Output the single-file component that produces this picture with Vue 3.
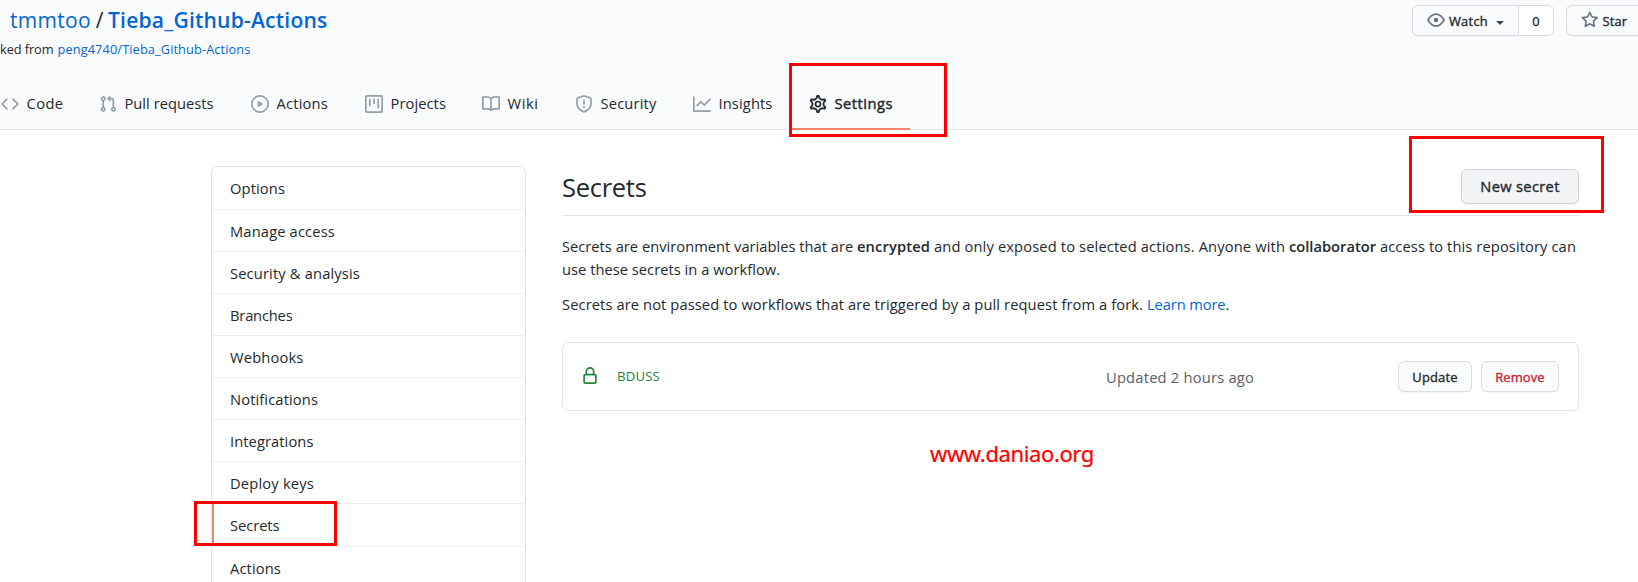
<script setup>
// Adjusts the tracking of a label so that it takes up the given width.
const vFit = {
  mounted(el, { value }) {
    const natural = el.getBoundingClientRect().width
    const count = el.textContent.length
    el.style.letterSpacing = `${((value - natural) / count).toFixed(3)}px`
  }
}

const icons = {
  code: 'M4.72 3.22a.75.75 0 011.06 1.06L2.06 8l3.72 3.72a.75.75 0 11-1.06 1.06L.47 8.53a.75.75 0 010-1.06l4.25-4.25zm6.56 0a.75.75 0 10-1.06 1.06L13.94 8l-3.72 3.72a.75.75 0 101.06 1.06l4.25-4.25a.75.75 0 000-1.06l-4.25-4.25z',
  pull: 'M7.177 3.073L9.573.677A.25.25 0 0110 .854v4.792a.25.25 0 01-.427.177L7.177 3.427a.25.25 0 010-.354zM3.75 2.5a.75.75 0 100 1.5.75.75 0 000-1.5zm-2.25.75a2.25 2.25 0 113 2.122v5.256a2.251 2.251 0 11-1.5 0V5.372A2.25 2.25 0 011.5 3.25zM11 2.5h-1V4h1a1 1 0 011 1v5.628a2.251 2.251 0 101.5 0V5A2.5 2.5 0 0011 2.5zm1 10.25a.75.75 0 111.5 0 .75.75 0 01-1.5 0zM3.75 12a.75.75 0 100 1.5.75.75 0 000-1.5z',
  play: 'M1.5 8a6.5 6.5 0 1113 0 6.5 6.5 0 01-13 0zM8 0a8 8 0 100 16A8 8 0 008 0zM6.379 5.227A.25.25 0 006 5.442v5.117a.25.25 0 00.379.214l4.264-2.559a.25.25 0 000-.428L6.379 5.227z',
  project: 'M1.75 0A1.75 1.75 0 000 1.75v12.5C0 15.216.784 16 1.75 16h12.5A1.75 1.75 0 0016 14.25V1.75A1.75 1.75 0 0014.25 0H1.75zM1.5 1.75a.25.25 0 01.25-.25h12.5a.25.25 0 01.25.25v12.5a.25.25 0 01-.25.25H1.75a.25.25 0 01-.25-.25V1.75zM11.75 3a.75.75 0 00-.75.75v7.5a.75.75 0 001.5 0v-7.5a.75.75 0 00-.75-.75zm-8.25.75a.75.75 0 011.5 0v5.5a.75.75 0 01-1.5 0v-5.5zM8 3a.75.75 0 00-.75.75v3.5a.75.75 0 001.5 0v-3.5A.75.75 0 008 3z',
  book: 'M0 1.75A.75.75 0 01.75 1h4.253c1.227 0 2.317.59 3 1.501A3.744 3.744 0 0111.006 1h4.245a.75.75 0 01.75.75v10.5a.75.75 0 01-.75.75h-4.507a2.25 2.25 0 00-1.591.659l-.622.621a.75.75 0 01-1.06 0l-.622-.621A2.25 2.25 0 005.258 13H.75a.75.75 0 01-.75-.75V1.75zm8.755 3a2.25 2.25 0 012.25-2.25H14.5v9h-3.757c-.71 0-1.4.201-1.992.572l.004-7.322zm-1.504 7.324l.004-5.073-.002-2.253A2.25 2.25 0 005.003 2.5H1.5v9h3.757a3.75 3.75 0 011.994.574z',
  shield: 'M7.467.133a1.75 1.75 0 011.066 0l5.25 1.68A1.75 1.75 0 0115 3.48V7c0 1.566-.32 3.182-1.303 4.682-.983 1.498-2.585 2.813-5.032 3.855a1.7 1.7 0 01-1.33 0c-2.447-1.042-4.049-2.357-5.032-3.855C1.32 10.182 1 8.566 1 7V3.48a1.75 1.75 0 011.217-1.667l5.25-1.68zm.61 1.429a.25.25 0 00-.153 0l-5.25 1.68a.25.25 0 00-.174.238V7c0 1.358.275 2.666 1.057 3.86.784 1.194 2.121 2.34 4.366 3.297a.2.2 0 00.154 0c2.245-.956 3.582-2.104 4.366-3.298C13.225 9.666 13.5 8.36 13.5 7V3.48a.25.25 0 00-.174-.237l-5.25-1.68zM9 10.5a1 1 0 11-2 0 1 1 0 012 0zm-.25-5.75a.75.75 0 10-1.5 0v3a.75.75 0 001.5 0v-3z',
  graph: 'M1.5 1.75a.75.75 0 00-1.5 0v12.5c0 .414.336.75.75.75h14.5a.75.75 0 000-1.5H1.5V1.75zm14.28 2.53a.75.75 0 00-1.06-1.06L10 7.94 7.53 5.47a.75.75 0 00-1.06 0L3.22 8.72a.75.75 0 001.06 1.06L7 7.06l2.47 2.47a.75.75 0 001.06 0l5.25-5.25z',
  eye: 'M1.679 7.932c.412-.621 1.242-1.75 2.366-2.717C5.175 4.242 6.527 3.5 8 3.5c1.473 0 2.824.742 3.955 1.715 1.124.967 1.954 2.096 2.366 2.717a.119.119 0 010 .136c-.412.621-1.242 1.75-2.366 2.717C10.825 11.758 9.473 12.5 8 12.5c-1.473 0-2.824-.742-3.955-1.715C2.92 9.818 2.09 8.69 1.679 8.068a.119.119 0 010-.136zM8 2c-1.981 0-3.67.992-4.933 2.078C1.797 5.169.88 6.423.43 7.1a1.619 1.619 0 000 1.798c.45.678 1.367 1.932 2.637 3.024C4.329 13.008 6.019 14 8 14c1.981 0 3.67-.992 4.933-2.078 1.27-1.091 2.187-2.345 2.637-3.023a1.619 1.619 0 000-1.798c-.45-.678-1.367-1.932-2.637-3.023C11.671 2.992 9.981 2 8 2zm0 8a2 2 0 100-4 2 2 0 000 4z',
  star: 'M8 .25a.75.75 0 01.673.418l1.882 3.815 4.21.612a.75.75 0 01.416 1.279l-3.046 2.97.719 4.192a.75.75 0 01-1.088.791L8 12.347l-3.766 1.98a.75.75 0 01-1.088-.79l.72-4.194L.818 6.374a.75.75 0 01.416-1.28l4.21-.611L7.327.668A.75.75 0 018 .25zm0 2.445L6.615 5.5a.75.75 0 01-.564.41l-3.097.45 2.24 2.184a.75.75 0 01.216.664l-.528 3.084 2.769-1.456a.75.75 0 01.698 0l2.77 1.456-.53-3.084a.75.75 0 01.216-.664l2.24-2.183-3.096-.45a.75.75 0 01-.564-.41L8 2.694v.001z',
  lock: 'M4 4v2h-.25A1.75 1.75 0 002 7.75v5.5c0 .966.784 1.75 1.75 1.75h8.5A1.75 1.75 0 0014 13.25v-5.5A1.75 1.75 0 0012.25 6H12V4a4 4 0 10-8 0zm6.5 2V4a2.5 2.5 0 00-5 0v2h5zM12 7.5h.25a.25.25 0 01.25.25v5.5a.25.25 0 01-.25.25h-8.5a.25.25 0 01-.25-.25v-5.5a.25.25 0 01.25-.25H12z'
}

const tabs = [
  { label: 'Code', icon: 'code', width: 37 },
  { label: 'Pull requests', icon: 'pull', width: 89 },
  { label: 'Actions', icon: 'play', width: 51.5 },
  { label: 'Projects', icon: 'project', width: 55.5 },
  { label: 'Wiki', icon: 'book', width: 31 },
  { label: 'Security', icon: 'shield', width: 56 },
  { label: 'Insights', icon: 'graph', width: 54 }
]

const menu = [
  { label: 'Options', width: 55 },
  { label: 'Manage access', width: 105 },
  { label: 'Security & analysis', width: 130 },
  { label: 'Branches', width: 62.5 },
  { label: 'Webhooks', width: 73.5 },
  { label: 'Notifications', width: 88 },
  { label: 'Integrations', width: 83.5 },
  { label: 'Deploy keys', width: 84 },
  { label: 'Secrets', width: 49.5, active: true },
  { label: 'Actions', width: 51 }
]
</script>

<template>
  <div class="page">
    <header class="header">
      <div class="top">
        <div class="repo">
          <div class="title">
            <a v-fit="81" class="fit">tmmtoo</a>
            <span class="slash">/</span>
            <a v-fit="219.5" class="fit name">Tieba_Github-Actions</a>
          </div>
          <div class="fork">
            <span v-fit="53.5" class="fit">ked from</span>
            <a v-fit="193" class="fit">peng4740/Tieba_Github-Actions</a>
          </div>
        </div>
        <div class="actions">
          <div class="group">
            <div class="btn watch">
              <svg class="icon" viewBox="0 0 16 16"><path fill-rule="evenodd" :d="icons.eye" /></svg>
              <span v-fit="39" class="fit">Watch</span>
              <i class="caret"></i>
            </div>
            <div class="count">0</div>
          </div>
          <div class="btn star">
            <svg class="icon" viewBox="0 0 16 16"><path fill-rule="evenodd" :d="icons.star" /></svg>
            <span v-fit="24.5" class="fit">Star</span>
          </div>
        </div>
      </div>
      <nav class="tabs">
        <a v-for="tab in tabs" :key="tab.label" class="tab">
          <svg class="icon" viewBox="0 0 16 16"><path fill-rule="evenodd" :d="icons[tab.icon]" /></svg>
          <span v-fit="tab.width" class="fit">{{ tab.label }}</span>
        </a>
        <a class="tab current">
          <svg class="icon gear" viewBox="0 0 16 16">
            <path transform="translate(8 8) scale(1.1) translate(-8 -8)" d="M7.429 1.525a6.593 6.593 0 011.142 0c.036.003.108.036.137.146l.289 1.105c.147.56.55.967.997 1.189.174.086.341.183.501.29.417.278.97.423 1.53.27l1.102-.303c.11-.03.175.016.195.046.219.31.41.641.573.989.014.031.022.11-.059.19l-.815.806c-.411.406-.562.957-.53 1.456a4.588 4.588 0 010 .582c-.032.499.119 1.05.53 1.456l.815.806c.08.08.073.159.059.19a6.494 6.494 0 01-.573.99c-.02.029-.086.074-.195.045l-1.103-.303c-.559-.153-1.112-.008-1.529.27-.16.107-.327.204-.5.29-.449.222-.851.628-.998 1.189l-.289 1.105c-.029.11-.101.143-.137.146a6.613 6.613 0 01-1.142 0c-.036-.003-.108-.037-.137-.146l-.289-1.105c-.147-.56-.55-.967-.997-1.189a4.502 4.502 0 01-.501-.29c-.417-.278-.97-.423-1.53-.27l-1.102.303c-.11.03-.175-.016-.195-.046a6.492 6.492 0 01-.573-.989c-.014-.031-.022-.11.059-.19l.815-.806c.411-.406.562-.957.53-1.456a4.587 4.587 0 010-.582c.032-.499-.119-1.05-.53-1.456l-.815-.806c-.08-.08-.073-.159-.059-.19a6.44 6.44 0 01.573-.99c.02-.029.086-.075.195-.045l1.103.303c.559.153 1.112.008 1.529-.27.16-.107.327-.204.5-.29.449-.222.851-.628.998-1.189l.289-1.105c.029-.11.101-.143.137-.146z" />
            <circle cx="8" cy="8" r="2.25" />
          </svg>
          <span v-fit="58.5" class="fit">Settings</span>
        </a>
      </nav>
    </header>

    <div class="body">
      <aside class="menu">
        <a v-for="item in menu" :key="item.label" class="entry" :class="{ active: item.active }">
          <span v-fit="item.width" class="fit">{{ item.label }}</span>
        </a>
      </aside>

      <main class="main">
        <div class="heading">
          <h2><span v-fit="84.5" class="fit">Secrets</span></h2>
          <div class="btn new"><span v-fit="79.5" class="fit">New secret</span></div>
        </div>
        <p class="text">
          <span v-fit="295" class="fit">Secrets are environment variables that are </span><b v-fit="73" class="fit">encrypted</b><span v-fit="359" class="fit"> and only exposed to selected actions. Anyone with </span><b v-fit="87" class="fit">collaborator</b><span v-fit="200" class="fit"> access to this repository can</span>
          <br />
          <span v-fit="218" class="fit">use these secrets in a workflow.</span>
        </p>
        <p class="text second">
          <span v-fit="585" class="fit">Secrets are not passed to workflows that are triggered by a pull request from a fork. </span><a v-fit="78.5" class="fit">Learn more</a>.
        </p>
        <div class="box">
          <svg class="icon lock" viewBox="0 0 16 16"><path fill-rule="evenodd" :d="icons.lock" /></svg>
          <code class="key"><span v-fit="43" class="fit">BDUSS</span></code>
          <span class="updated"><span v-fit="148" class="fit">Updated 2 hours ago</span></span>
          <div class="btn update"><span v-fit="45.5" class="fit">Update</span></div>
          <div class="btn remove"><span v-fit="49.5" class="fit">Remove</span></div>
        </div>
        <div class="site"><span v-fit="164" class="fit">www.daniao.org</span></div>
      </main>
    </div>

    <div class="mark mark-settings"></div>
    <div class="mark mark-new"></div>
    <div class="mark mark-secrets"></div>
  </div>
</template>

<style>
body {
  margin: 0;
  overflow: hidden;
}
</style>

<style scoped>
* {
  box-sizing: border-box;
}
.page {
  position: relative;
  width: 1638px;
  height: 582px;
  overflow: hidden;
  background: #fff;
  color: #24292e;
  font: 14.7px/23px "Open Sans", "Noto Sans", sans-serif;
}
.fit {
  display: inline-block;
  white-space: pre;
}
a {
  color: #0366d6;
}
.icon {
  flex: none;
  width: 18px;
  height: 18px;
  fill: currentColor;
}
.header {
  height: 130px;
  background: #fafbfc;
  border-bottom: 1px solid #e1e4e8;
}
.top {
  display: flex;
  justify-content: space-between;
  height: 77px;
  padding-top: 5px;
}
.title {
  display: flex;
  height: 30px;
  padding-left: 10px;
  font-size: 21px;
  line-height: 30px;
}
.slash {
  width: 17px;
  text-align: center;
}
.name {
  font-weight: 600;
}
.fork {
  display: flex;
  gap: 4px;
  margin-top: 5px;
  font-size: 12.8px;
  line-height: 18px;
}
.actions {
  display: flex;
  gap: 12px;
}
.btn {
  display: flex;
  align-items: center;
  justify-content: center;
  height: 31px;
  border: 1px solid #d9dbde;
  border-radius: 6px;
  background: #fafbfc;
  box-shadow: 0 1px 0 rgba(27, 31, 35, 0.04);
  font-size: 12.8px;
  -webkit-text-stroke: 0.35px currentColor;
}
.group {
  display: flex;
}
.watch {
  justify-content: flex-start;
  width: 107px;
  padding-left: 14px;
  border-radius: 6px 0 0 6px;
}
.btn .icon {
  margin-top: -1px;
  color: #6a737d;
}
.btn .fit {
  padding-top: 1px;
}
.watch .icon {
  margin-right: 4px;
}
.caret {
  margin: 4px 0 0 8px;
  border: 4.5px solid transparent;
  border-top-color: #444a50;
  border-bottom: 0;
}
.count {
  width: 35px;
  height: 31px;
  border: 1px solid #d9dbde;
  border-left: 0;
  border-radius: 0 6px 6px 0;
  background: #fff;
  font-size: 12.8px;
  line-height: 31px;
  text-align: center;
  -webkit-text-stroke: 0.35px currentColor;
}
.star {
  justify-content: flex-start;
  width: 72px;
  padding-left: 14px;
  border-right: 0;
  border-radius: 6px 0 0 6px;
}
.star .icon {
  width: 17.6px;
  margin-right: 4px;
}
.tabs {
  display: grid;
  grid-template-columns: 98px 152px 114px 117px 93px 118px 116px 102px;
  height: 53px;
  padding-left: 1px;
}
.tab {
  position: relative;
  display: flex;
  align-items: center;
  gap: 7.5px;
  color: #24292e;
}
.tab .icon {
  color: #959da5;
}
.current {
  -webkit-text-stroke: 0.45px currentColor;
}
.tab .gear {
  fill: none;
  stroke: #24292e;
  stroke-width: 1.5;
  overflow: visible;
}
.current::after {
  position: absolute;
  bottom: 0;
  left: -18px;
  width: 119px;
  height: 2px;
  background: #f9826c;
  content: "";
}
.body {
  display: flex;
  padding-left: 211px;
}
.menu {
  flex: none;
  width: 315px;
  height: 440px;
  margin-top: 36px;
  padding-right: 1px;
  border: 1px solid #e1e4e8;
  border-radius: 6px 6px 0 0;
}
.entry {
  display: flex;
  align-items: center;
  height: 42px;
  padding: 2px 0 0 18px;
  border-bottom: 1px solid #eaecef;
  color: #24292e;
}
.entry:first-child,
.active {
  height: 43px;
  padding-top: 0;
}
.active {
  box-shadow: inset 2px 0 #f9826c;
}
.main {
  width: 1017px;
  margin-left: 36px;
}
.heading {
  display: flex;
  justify-content: space-between;
  height: 86px;
  padding-top: 39px;
  border-bottom: 1px solid #e1e4e8;
}
h2 {
  margin: 0;
  font-size: 25.5px;
  font-weight: 400;
  line-height: 36px;
}
.new {
  width: 118px;
  height: 35px;
  border-color: #d1d5d9;
  background: #f3f4f6;
  font-size: 14.7px;
}
.new .fit {
  padding-top: 0;
}
.text {
  margin: 19px 0 0;
  white-space: nowrap;
}
.second {
  margin-top: 12px;
}
b {
  font-weight: 600;
}
.box {
  display: flex;
  align-items: center;
  height: 69px;
  margin-top: 26px;
  padding: 0 19px 0 18px;
  border: 1px solid #e1e4e8;
  border-radius: 6px;
}
.lock {
  margin-top: -1px;
  color: #22863a;
}
.key {
  width: 489px;
  margin-left: 18px;
  color: #22863a;
  font: 13.2px/23px "Open Sans", "Noto Sans", sans-serif;
}
.updated {
  width: 292px;
  padding-top: 1px;
  color: #586069;
}
.update {
  width: 74px;
  font-size: 13px;
}
.remove {
  width: 78px;
  margin-left: 9px;
  color: #cb2431;
  font-size: 13px;
}
.site {
  margin: 27px 0 0 368px;
  color: #f00;
  font: 22px/30px "Noto Sans", sans-serif;
  -webkit-text-stroke: 0.2px currentColor;
}
.mark {
  position: absolute;
  border: 3px solid #f00;
}
.mark-settings {
  top: 63px;
  left: 789px;
  width: 158px;
  height: 74px;
}
.mark-new {
  top: 136px;
  left: 1409px;
  width: 195px;
  height: 77px;
}
.mark-secrets {
  top: 501px;
  left: 194px;
  width: 143px;
  height: 45px;
}
</style>
